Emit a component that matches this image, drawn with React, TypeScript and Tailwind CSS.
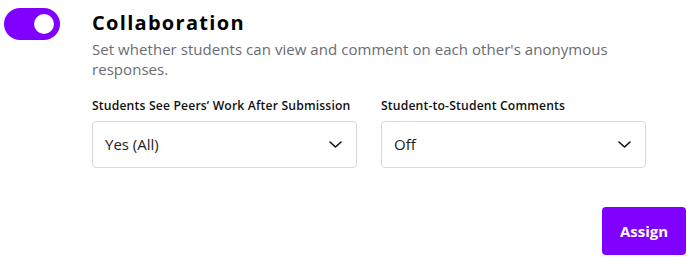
import React from "react";

function Chevron() {
  return (
    <svg width="13" height="7" viewBox="0 0 13 7" fill="none" className="shrink-0">
      <path d="M1 1l5.5 5 5.5-5" stroke="#111" strokeWidth="1.6" strokeLinecap="round" strokeLinejoin="round" />
    </svg>
  );
}

function Select({ label, value }: { label: string; value: string }) {
  return (
    <div className="flex flex-col w-[265px]">
      <div className="text-[12.2px] font-semibold text-[#111] leading-[18px] tracking-[0.15px]">{label}</div>
      <div className="mt-[6px] h-[47px] border border-[#d9d9de] rounded-[4px] flex items-center justify-between pl-[12px] pr-[14px]">
        <span className="text-[15px] text-[#222]">{value}</span>
        <Chevron />
      </div>
    </div>
  );
}

export default function App() {
  return (
    <div className="w-[689px] h-[266px] bg-white relative" style={{ fontFamily: "'Open Sans', 'Noto Sans', sans-serif" }}>
      <div className="flex pt-[8px] pl-[4px]">
        <div className="w-[56px] h-[32px] rounded-full bg-[#8000ff] flex items-center justify-end pr-[6px] shrink-0">
          <div className="w-[20px] h-[20px] rounded-full bg-white" />
        </div>
        <div className="ml-[32px] flex flex-col">
          <div className="text-[20px] font-bold text-black leading-[26px] mt-[2px] tracking-[1.3px]">Collaboration</div>
          <div className="text-[15px] text-[#6b6b73] leading-[20px] w-[540px] mt-[3px] tracking-[0.05px]">
            Set whether students can view and comment on each other's anonymous responses.
          </div>
          <div className="flex gap-[24px] mt-[18px]">
            <Select label="Students See Peers’ Work After Submission" value="Yes (All)" />
            <Select label="Student-to-Student Comments" value="Off" />
          </div>
        </div>
      </div>
      <div className="flex justify-end pr-[3px] mt-[39px]">
        <button className="w-[84px] h-[48px] rounded-[4px] bg-[#8000ff] text-white text-[15px] font-bold">Assign</button>
      </div>
    </div>
  );
}
